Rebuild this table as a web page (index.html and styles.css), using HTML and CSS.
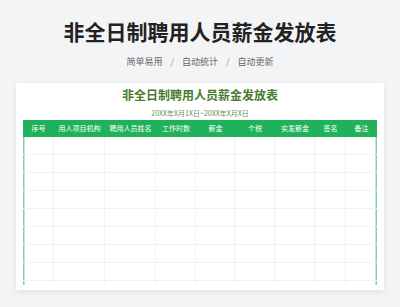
FILE: index.html
```html
<!DOCTYPE html>
<html lang="zh-CN">
<head>
<meta charset="utf-8">
<title>非全日制聘用人员薪金发放表</title>
<link rel="stylesheet" href="styles.css">
</head>
<body>
<header class="hero">
  <h1 class="hero-title">非全日制聘用人员薪金发放表</h1>
  <p class="hero-tags"><span>简单易用</span><span class="sep">/</span><span>自动统计</span><span class="sep">/</span><span>自动更新</span></p>
</header>
<main class="card">
  <h2 class="sheet-title">非全日制聘用人员薪金发放表</h2>
  <p class="sheet-date">20XX年X月1X日~20XX年X月X日</p>
  <div class="sheet">
    <div class="sheet-head">
      <span>序号</span><span>用人项目机构</span><span>聘用人员姓名</span><span>工作时数</span><span>薪金</span><span>个税</span><span>实发薪金</span><span>签名</span><span>备注</span>
    </div>
    <div class="sheet-body">
      <div class="row"><i></i><i></i><i></i><i></i><i></i><i></i><i></i><i></i><i></i></div>
      <div class="row"><i></i><i></i><i></i><i></i><i></i><i></i><i></i><i></i><i></i></div>
      <div class="row"><i></i><i></i><i></i><i></i><i></i><i></i><i></i><i></i><i></i></div>
      <div class="row"><i></i><i></i><i></i><i></i><i></i><i></i><i></i><i></i><i></i></div>
      <div class="row"><i></i><i></i><i></i><i></i><i></i><i></i><i></i><i></i><i></i></div>
      <div class="row"><i></i><i></i><i></i><i></i><i></i><i></i><i></i><i></i><i></i></div>
      <div class="row"><i></i><i></i><i></i><i></i><i></i><i></i><i></i><i></i><i></i></div>
      <div class="row"><i></i><i></i><i></i><i></i><i></i><i></i><i></i><i></i><i></i></div>
      <div class="row"><i></i><i></i><i></i><i></i><i></i><i></i><i></i><i></i><i></i></div>
    </div>
  </div>
</main>
</body>
</html>
```
FILE: styles.css
```css
* { box-sizing: border-box; }
html, body { margin: 0; padding: 0; }
body {
  width: 400px;
  height: 307px;
  overflow: hidden;
  background: #f3f4f6;
  font-family: "Noto Sans CJK SC", "Noto Sans", sans-serif;
}
.hero { text-align: center; padding-top: 19px; }
.hero-title {
  margin: 0;
  font-size: 21px;
  line-height: 24px;
  font-weight: 700;
  color: #222;
}
.hero-tags {
  margin: 13px 0 0;
  font-size: 9px;
  line-height: 12px;
  color: #666;
  display: flex;
  justify-content: center;
}
.hero-tags .sep { margin: 0 8px; color: #999; }
.card {
  margin: 15px 16px 0;
  height: 207px;
  background: #fff;
  box-shadow: 0 2px 6px rgba(0, 0, 0, 0.08);
  padding: 4px 7px 0;
}
.sheet-title {
  margin: 0;
  text-align: center;
  font-size: 12px;
  line-height: 16px;
  font-weight: 700;
  color: #4a7a2e;
}
.sheet-date {
  margin: 5px 0 0;
  text-align: center;
  font-size: 7px;
  line-height: 10px;
  color: #6b8f4c;
}
.sheet {
  --cols: 31px 51px 51px 40px 39px 40px 40px 31px 1fr;
  margin-top: 1.5px;
  height: 165px;
  overflow: hidden;
}
.sheet-head {
  display: grid;
  grid-template-columns: var(--cols);
  height: 17px;
  align-items: center;
  background: #1fb25a;
  color: #fff;
  font-size: 7px;
  text-align: center;
  white-space: nowrap;
}
.sheet-body {
  height: 148px;
  box-shadow: inset 1.5px 0 0 #7dd3a0, inset -1.5px 0 0 #7dd3a0;
}
.row {
  display: grid;
  grid-template-columns: var(--cols);
  height: 18.1px;
  border-bottom: 1px solid #f0f3f1;
}
.row i { border-right: 1px solid #f0f3f1; }
.row i:last-child { border-right: none; }
```
